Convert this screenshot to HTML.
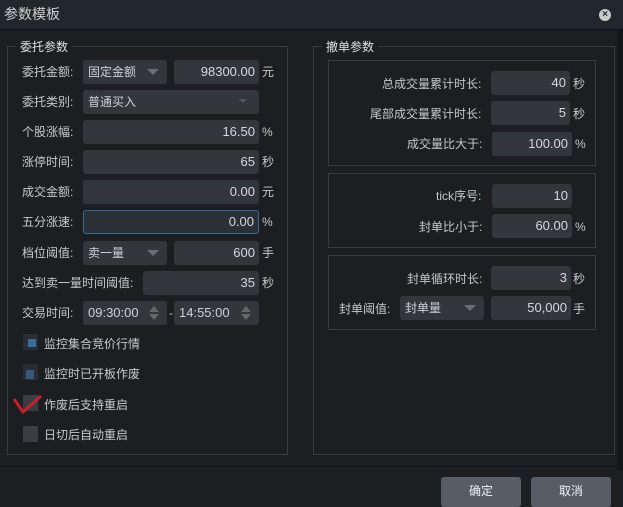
<!DOCTYPE html><html><head><meta charset="utf-8"><style>
*{margin:0;padding:0;box-sizing:border-box}
body{width:623px;height:500px;background:#1d1e22;font-family:"Liberation Sans","Noto Sans CJK SC",sans-serif;font-size:12px;color:#c8c8c8;position:relative;overflow:hidden}
.a{position:absolute}
.t{position:absolute;white-space:nowrap;line-height:14px}
.in{position:absolute;background:#33363d;border-radius:3px;height:24px;color:#d8d8d8;font-size:13px;line-height:24px;text-align:right;padding-right:4px}
.cb{position:absolute;background:#33363d;border-radius:3px;height:24px;color:#d0d0d0;font-size:12px;line-height:24px;padding-left:5px}
.tri{position:absolute;width:0;height:0;border-left:6px solid transparent;border-right:6px solid transparent;border-top:6px solid #6a6d74;top:9px}
.gb{position:absolute;border:1px solid #3a3c41}
.chk{position:absolute;width:15px;height:16px;background:#3a3d44}
</style></head><body>
<div class="a" style="left:0;top:0;width:623px;height:30px;background:#22262d;border-bottom:1px solid #111"></div>
<div class="t" style="left:4px;top:7px;font-size:14px;color:#d0d0d0">参数模板</div>
<div class="a" style="left:599px;top:9px;width:12px;height:12px;border-radius:6px;background:#c8c8c8;color:#22262d;font-size:10px;line-height:12px;text-align:center;font-weight:bold">×</div>
<div class="a" style="left:617px;top:30px;width:6px;height:440px;background:#14161a"></div>

<div class="gb" style="left:7px;top:46px;width:281px;height:409px"></div>
<div class="t" style="left:16px;top:40px;background:#1d1e22;padding:0 4px;color:#e0e0e0">委托参数</div>
<div class="gb" style="left:313px;top:46px;width:302px;height:409px"></div>
<div class="t" style="left:322px;top:40px;background:#1d1e22;padding:0 4px;color:#e0e0e0">撤单参数</div>

<!-- left rows -->
<div class="t" style="left:22px;top:65px">委托金额:</div>
<div class="cb" style="left:83px;top:60px;width:84px">固定金额<div class="tri" style="left:64px"></div></div>
<div class="in" style="left:174px;top:60px;width:85px">98300.00</div><div class="t" style="left:262px;top:65px">元</div>

<div class="t" style="left:22px;top:95px">委托类别:</div>
<div class="cb" style="left:83px;top:90px;width:176px">普通买入<div class="tri" style="left:156px;border-width:4px 4px 0;border-top-color:#555"></div></div>

<div class="t" style="left:22px;top:125px">个股涨幅:</div>
<div class="in" style="left:83px;top:120px;width:176px">16.50</div><div class="t" style="left:262px;top:125px">%</div>
<div class="t" style="left:22px;top:155px">涨停时间:</div>
<div class="in" style="left:83px;top:150px;width:176px">65</div><div class="t" style="left:262px;top:155px">秒</div>
<div class="t" style="left:22px;top:185px">成交金额:</div>
<div class="in" style="left:83px;top:180px;width:176px">0.00</div><div class="t" style="left:262px;top:185px">元</div>
<div class="t" style="left:22px;top:215px">五分涨速:</div>
<div class="in" style="left:83px;top:210px;width:176px;border:1px solid #2e6a9a;line-height:22px;background:#2b2f36">0.00</div><div class="t" style="left:262px;top:215px">%</div>

<div class="t" style="left:22px;top:246px">档位阈值:</div>
<div class="cb" style="left:83px;top:241px;width:84px">卖一量<div class="tri" style="left:64px"></div></div>
<div class="in" style="left:174px;top:241px;width:85px">600</div><div class="t" style="left:262px;top:246px">手</div>

<div class="t" style="left:22px;top:276px">达到卖一量时间阈值:</div>
<div class="in" style="left:143px;top:271px;width:116px">35</div><div class="t" style="left:262px;top:276px">秒</div>

<div class="t" style="left:22px;top:306px">交易时间:</div>
<div class="cb" style="left:83px;top:301px;width:84px;font-size:13px">09:30:00<div class="a" style="left:66px;top:5px;width:0;height:0;border:5px solid transparent;border-bottom:6px solid #666;border-top:0"></div><div class="a" style="left:66px;top:13px;width:0;height:0;border:5px solid transparent;border-top:6px solid #666;border-bottom:0"></div></div>
<div class="t" style="left:169px;top:306px">-</div>
<div class="cb" style="left:174px;top:301px;width:85px;font-size:13px">14:55:00<div class="a" style="left:67px;top:5px;width:0;height:0;border:5px solid transparent;border-bottom:6px solid #666;border-top:0"></div><div class="a" style="left:67px;top:13px;width:0;height:0;border:5px solid transparent;border-top:6px solid #666;border-bottom:0"></div></div>

<div class="chk" style="left:23px;top:334px;background:#2a2d33"><div class="a" style="left:5px;top:5px;width:8px;height:8px;background:#3a6e9a"></div></div>
<div class="t" style="left:44px;top:337px">监控集合竞价行情</div>
<div class="chk" style="left:23px;top:364px;background:#2a2d33"><div class="a" style="left:3px;top:6px;width:8px;height:9px;background:#34597a"></div></div>
<div class="t" style="left:44px;top:367px">监控时已开板作废</div>
<div class="chk" style="left:23px;top:395px"></div>
<svg class="a" style="left:12px;top:393px" width="32" height="22"><path d="M2 6 L11 19 L29 3" stroke="#c41e2a" stroke-width="3" fill="none"/></svg>
<div class="t" style="left:44px;top:398px">作废后支持重启</div>
<div class="chk" style="left:23px;top:426px"></div>
<div class="t" style="left:44px;top:428px">日切后自动重启</div>

<!-- right -->
<div class="gb" style="left:328px;top:60px;width:268px;height:106px"></div>
<div class="t" style="left:382px;top:77px">总成交量累计时长:</div>
<div class="in" style="left:491px;top:71px;width:79px">40</div><div class="t" style="left:573px;top:77px">秒</div>
<div class="t" style="left:370px;top:107px">尾部成交量累计时长:</div>
<div class="in" style="left:491px;top:101px;width:79px">5</div><div class="t" style="left:573px;top:107px">秒</div>
<div class="t" style="left:407px;top:137px">成交量比大于:</div>
<div class="in" style="left:492px;top:132px;width:80px">100.00</div><div class="t" style="left:575px;top:137px">%</div>

<div class="gb" style="left:328px;top:173px;width:268px;height:75px"></div>
<div class="t" style="left:436px;top:189px">tick序号:</div>
<div class="in" style="left:492px;top:184px;width:80px">10</div>
<div class="t" style="left:419px;top:220px">封单比小于:</div>
<div class="in" style="left:492px;top:214px;width:80px">60.00</div><div class="t" style="left:575px;top:220px">%</div>

<div class="gb" style="left:328px;top:255px;width:268px;height:75px"></div>
<div class="t" style="left:407px;top:272px">封单循环时长:</div>
<div class="in" style="left:491px;top:266px;width:80px">3</div><div class="t" style="left:573px;top:272px">秒</div>
<div class="t" style="left:339px;top:302px">封单阈值:</div>
<div class="cb" style="left:400px;top:296px;width:84px">封单量<div class="tri" style="left:64px"></div></div>
<div class="in" style="left:491px;top:296px;width:80px">50,000</div><div class="t" style="left:573px;top:302px">手</div>

<div class="a" style="left:0;top:466px;width:617px;height:1px;background:#101114"></div>
<div class="a" style="left:441px;top:477px;width:80px;height:30px;background:#575c66;border-radius:3px;color:#f0f0f0;text-align:center;line-height:28px;font-size:12px">确定</div>
<div class="a" style="left:531px;top:477px;width:80px;height:30px;background:#575c66;border-radius:3px;color:#f0f0f0;text-align:center;line-height:28px;font-size:12px">取消</div>
</body></html>
